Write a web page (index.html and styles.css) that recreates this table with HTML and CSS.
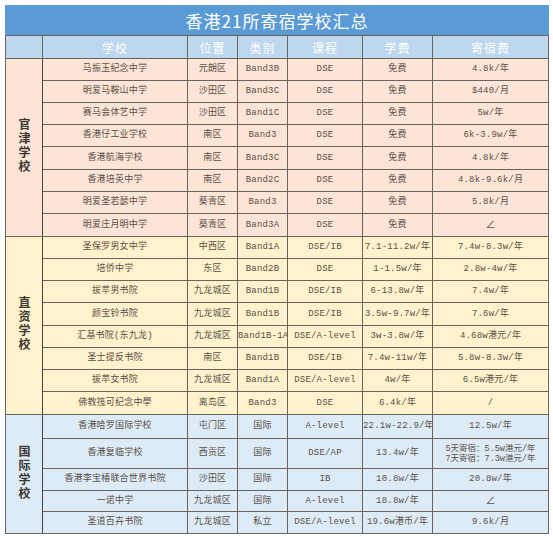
FILE: index.html
```html
<!DOCTYPE html>
<html lang="zh">
<head>
<meta charset="utf-8">
<title>香港21所寄宿学校汇总</title>
<link rel="stylesheet" href="styles.css">
</head>
<body>
<table class="sheet">
  <colgroup>
    <col class="c-group">
    <col class="c-name">
    <col class="c-loc">
    <col class="c-band">
    <col class="c-course">
    <col class="c-fee">
    <col class="c-board">
  </colgroup>
  <thead>
    <tr class="title-row"><th colspan="7" class="title">香港21所寄宿学校汇总</th></tr>
    <tr class="head-row">
      <th></th><th>学校</th><th>位置</th><th>类别</th><th>课程</th><th>学费</th><th>寄宿费</th>
    </tr>
  </thead>
  <tbody class="official">
    <tr><th rowspan="8" class="group"><span class="vt">官津学校</span></th>
      <td>马振玉纪念中学</td><td>元朗区</td><td>Band3B</td><td>DSE</td><td>免费</td><td>4.8k/年</td></tr>
    <tr><td>明爱马鞍山中学</td><td>沙田区</td><td>Band3C</td><td>DSE</td><td>免费</td><td>$440/月</td></tr>
    <tr><td>赛马会体艺中学</td><td>沙田区</td><td>Band1C</td><td>DSE</td><td>免费</td><td>5w/年</td></tr>
    <tr><td>香港仔工业学校</td><td>南区</td><td>Band3</td><td>DSE</td><td>免费</td><td>6k-3.9w/年</td></tr>
    <tr><td>香港航海学校</td><td>南区</td><td>Band3C</td><td>DSE</td><td>免费</td><td>4.8k/年</td></tr>
    <tr><td>香港培英中学</td><td>南区</td><td>Band2C</td><td>DSE</td><td>免费</td><td>4.8k-9.6k/月</td></tr>
    <tr><td>明爱圣若瑟中学</td><td>葵青区</td><td>Band3</td><td>DSE</td><td>免费</td><td>5.8k/月</td></tr>
    <tr><td>明爱庄月明中学</td><td>葵青区</td><td>Band3A</td><td>DSE</td><td>免费</td><td class="none">∠</td></tr>
  </tbody>
  <tbody class="direct">
    <tr><th rowspan="8" class="group"><span class="vt">直资学校</span></th>
      <td>圣保罗男女中学</td><td>中西区</td><td>Band1A</td><td>DSE/IB</td><td>7.1-11.2w/年</td><td>7.4w-8.3w/年</td></tr>
    <tr><td>培侨中学</td><td>东区</td><td>Band2B</td><td>DSE</td><td>1-1.5w/年</td><td>2.8w-4w/年</td></tr>
    <tr><td>拔萃男书院</td><td>九龙城区</td><td>Band1B</td><td>DSE/IB</td><td>6-13.8w/年</td><td>7.4w/年</td></tr>
    <tr><td>颜宝铃书院</td><td>九龙城区</td><td>Band1B</td><td>DSE/IB</td><td>3.5w-9.7w/年</td><td>7.6w/年</td></tr>
    <tr><td>汇基书院(东九龙)</td><td>九龙城区</td><td class="tight">Band1B-1A</td><td>DSE/A-level</td><td>3w-3.8w/年</td><td>4.68w港元/年</td></tr>
    <tr><td>圣士提反书院</td><td>南区</td><td>Band1B</td><td>DSE/IB</td><td>7.4w-11w/年</td><td>5.8w-8.3w/年</td></tr>
    <tr><td>拔萃女书院</td><td>九龙城区</td><td>Band1A</td><td>DSE/A-level</td><td>4w/年</td><td>6.5w港元/年</td></tr>
    <tr><td>佛教筏可纪念中學</td><td>离岛区</td><td>Band3</td><td>DSE</td><td>6.4k/年</td><td>/</td></tr>
  </tbody>
  <tbody class="intl">
    <tr class="r24"><th rowspan="5" class="group"><span class="vt">国际学校</span></th>
      <td>香港哈罗国际学校</td><td>屯门区</td><td>国际</td><td>A-level</td><td class="tight">22.1w-22.9/年</td><td>12.5w/年</td></tr>
    <tr class="r30"><td>香港复临学校</td><td>西贡区</td><td>国际</td><td>DSE/AP</td><td>13.4w/年</td><td class="two">5天寄宿：5.5w港元/年<br>7天寄宿：7.3w港元/年</td></tr>
    <tr><td>香港李宝椿联合世界书院</td><td>沙田区</td><td>国际</td><td>IB</td><td>10.8w/年</td><td>20.8w/年</td></tr>
    <tr class="r21"><td>一诺中学</td><td>九龙城区</td><td>国际</td><td>A-level</td><td>18.8w/年</td><td class="none">∠</td></tr>
    <tr><td>圣道百卉书院</td><td>九龙城区</td><td>私立</td><td>DSE/A-level</td><td>19.6w港币/年</td><td>9.6k/月</td></tr>
  </tbody>
</table>
</body>
</html>
```

FILE: styles.css
```css
html, body {
  margin: 0;
  padding: 0;
  background: #ffffff;
}

body {
  padding: 5px 0 0 5px;
  font-family: "Liberation Mono", "Noto Sans CJK SC", monospace;
  color: #5a5048;
}

.sheet {
  border-collapse: collapse;
  table-layout: fixed;
  width: 543px;
  border: 1px solid #9a9a9a;
}

.c-group { width: 37px; }
.c-name { width: 145px; }
.c-loc { width: 50px; }
.c-band { width: 50px; }
.c-course { width: 75px; }
.c-fee { width: 70px; }
.c-board { width: 116px; }

.sheet td,
.sheet th {
  border: 1px solid #6b645e;
  padding: 0;
  text-align: center;
  vertical-align: middle;
  overflow: hidden;
  white-space: nowrap;
}

.sheet td {
  font-size: 9px;
  line-height: 11px;
  letter-spacing: 0.2px;
}

.title-row { height: 30px; }

.title {
  background: #5b9bd5;
  color: #ffffff;
  font-family: "Noto Sans CJK SC", sans-serif;
  font-weight: 400;
  font-size: 17px;
  letter-spacing: 1px;
  border-color: #5b9bd5 !important;
  border-bottom-color: #6b645e !important;
}

.head-row { height: 23px; }

.head-row th {
  background: #bdd7ee;
  color: #ffffff;
  font-family: "Noto Sans CJK SC", sans-serif;
  font-weight: 400;
  font-size: 12px;
  letter-spacing: 1px;
}

.sheet tbody tr { height: 22px; }

.official td, .official th { background: #fce4d6; }
.direct td, .direct th { background: #fff2cc; }
.intl td, .intl th { background: #ddebf7; }

.official tr:nth-child(5),
.official tr:nth-child(8) { height: 23px; }
.direct tr:nth-child(4),
.direct tr:nth-child(8) { height: 23px; }

.intl tr.r24 { height: 24px; }
.intl tr.r30 { height: 30px; }
.intl tr.r21 { height: 21px; }

.group {
  font-family: "Noto Sans CJK SC", sans-serif;
  font-weight: 700;
  font-size: 12px;
  color: #3d3832;
  border-right-color: #4a4540 !important;
}

.vt {
  display: inline-block;
  writing-mode: vertical-rl;
  text-orientation: upright;
  letter-spacing: 2px;
  line-height: 14px;
}

.tight {
  letter-spacing: -0.2px;
}

.two {
  font-size: 8.5px !important;
  line-height: 10px !important;
  letter-spacing: 0 !important;
}

.none {
  font-size: 10px !important;
}
```
